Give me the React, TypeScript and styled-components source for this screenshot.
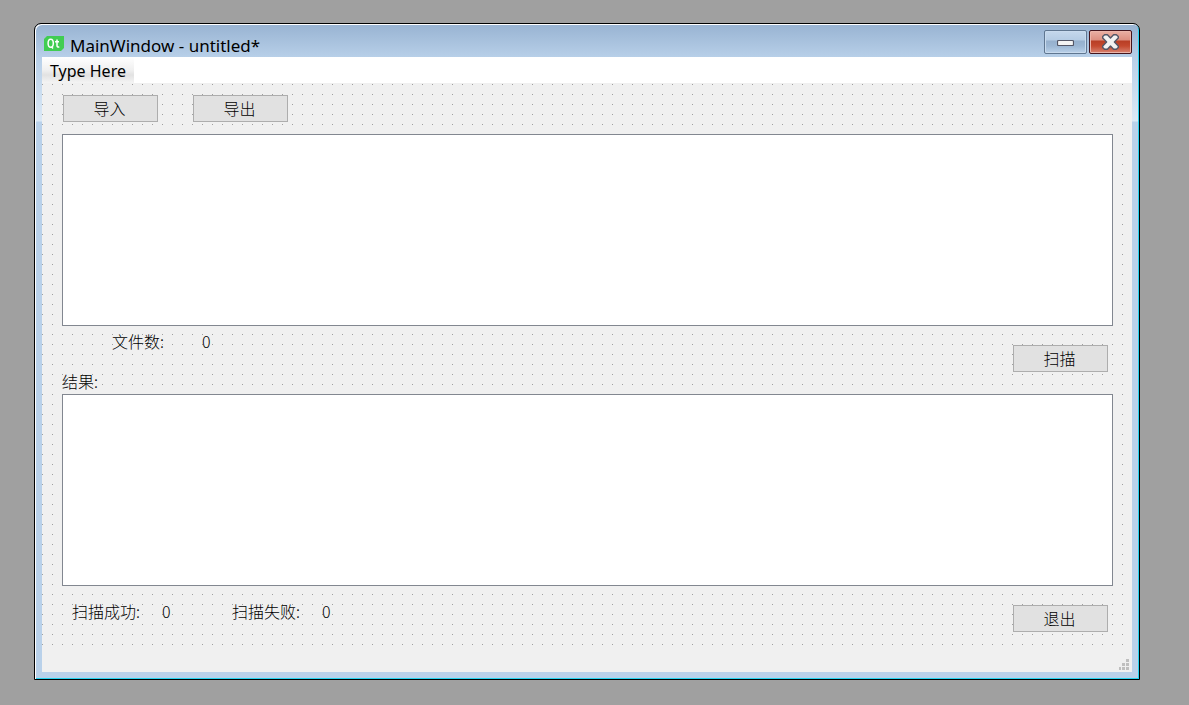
import React from "react";
import styled, { createGlobalStyle } from "styled-components";

const GlobalStyle = createGlobalStyle`
  * { box-sizing: border-box; }
  body { margin: 0; background: #a0a0a0; color: #000; }
  body, button, textarea { font: 300 16px/20px "Noto Sans CJK SC", sans-serif; }
`;

const Desktop = styled.div`
  display: flex;
  min-height: 100vh;
  padding: 23px 49px 25px 34px;
`;

const Window = styled.main`
  flex: 1;
  display: flex;
  flex-direction: column;
  border: 1px solid #000;
  border-radius: 7px 7px 0 0;
  padding: 0 7px 7px;
  background: linear-gradient(#98b3d2 0, #b7cfe8 33px, #dbe9f6 97px, #b9d1ea 98px);
  box-shadow: inset 1px 1px 0 #fff, inset -1px -1px 0 #27d3f0;
`;

const TitleBar = styled.header`
  display: flex;
  align-items: flex-start;
  height: 33px;
`;

const Title = styled.h1`
  flex: 1;
  margin: 12px 0 0 6px;
  font: 17px/20px "Noto Sans", sans-serif;
`;

const Logo = styled.svg`
  margin: 12px 0 0 2px;
`;

const Controls = styled.div`
  display: flex;
  gap: 2px;
  padding-top: 6px;
`;

const ControlButton = styled.button<{ $danger?: boolean }>`
  display: flex;
  align-items: center;
  justify-content: center;
  width: 43px;
  height: 24px;
  padding: 0;
  border: 1px solid ${(p) => (p.$danger ? "#43141c" : "#5f7690")};
  border-radius: 2px;
  background: ${(p) =>
    p.$danger
      ? "linear-gradient(#eab0a4 0, #dc8f80 9px, #b83e25 10px, #c4492f 15px, #d88472 22px)"
      : "linear-gradient(#c5d8ec 0, #b5cce4 9px, #96b0cd 10px, #9cb7d4 15px, #bad1e9 22px)"};
  box-shadow: inset 0 0 0 1px ${(p) => (p.$danger ? "#eab5aa" : "#c9dbee")};
`;

const Client = styled.div`
  flex: 1;
  display: flex;
  flex-direction: column;
  background: #f0f0f0;
`;

const MenuBar = styled.nav`
  display: flex;
  height: 26px;
  background: #fff;
`;

const MenuButton = styled.button`
  padding: 2px 8px 0;
  border: 0;
  background: linear-gradient(#fff 0, #f0f0f0 13px, #e2e2e2 18px, #f4f4f4 26px);
  font: 16px/20px "Noto Sans", sans-serif;
`;

const Form = styled.form`
  flex: 1;
  display: flex;
  flex-direction: column;
  padding: 12px 19px 0 20px;
  background: radial-gradient(circle at 0 0, #a0a0a0 1px, transparent 1px) 0 1px / 10px 10px;
`;

const ActionRow = styled.div`
  display: flex;
  gap: 35px;
  padding: 0 1px 12px;
`;

const PushButton = styled.button`
  flex: none;
  width: 95px;
  height: 27px;
  padding: 0 2px 2px 0;
  border: 1px solid #adadad;
  background: #e1e1e1;
`;

const ListBox = styled.textarea`
  flex: 1 0 80px;
  width: 100%;
  padding: 4px;
  border: 1px solid #828790;
  border-radius: 0;
  background: #fff;
  resize: none;
  outline: none;
`;

const InfoRow = styled.div<{ $height: number }>`
  display: flex;
  justify-content: space-between;
  align-items: flex-start;
  height: ${(p) => p.$height}px;
  padding: 5px 5px 0 0;

  & > ${PushButton} {
    margin-top: 14px;
  }
`;

const InfoLabels = styled.div`
  display: flex;
  flex-direction: column;
  gap: 20px;
`;

const Counters = styled.div<{ $indent: number; $top?: number }>`
  display: flex;
  padding: ${(p) => p.$top ?? 0}px 0 0 ${(p) => p.$indent}px;
`;

const Counter = styled.div`
  display: flex;
  width: 160px;

  & > label {
    width: 90px;
  }
`;

const StatusBar = styled.footer`
  display: flex;
  justify-content: flex-end;
  align-items: flex-end;
  height: 24px;
  padding: 0 3px 2px;
`;

function Stat({ id, label }: { id: string; label: string }) {
  return (
    <Counter>
      <label htmlFor={id}>{label}</label>
      <output id={id}>0</output>
    </Counter>
  );
}

export default function App() {
  return (
    <>
      <GlobalStyle />
      <Desktop>
        <Window>
          <TitleBar>
            <Logo width="20" height="15" viewBox="0 0 20 15" aria-hidden="true">
              <path d="M3 0H20V12L17 15H0V3Z" fill="#41cd52" />
              <path d="M6.7 3.2c-1.8 0-2.6 1.3-2.6 4s.8 4 2.6 4 2.6-1.3 2.6-4-.8-4-2.6-4ZM7.5 10.8l1.5 1.7M13 3.6v6c0 1.2.7 1.6 2.3 1.3M11 5.8h4" fill="none" stroke="#fff" strokeWidth="1.5" />
            </Logo>
            <Title>MainWindow - untitled*</Title>
            <Controls>
              <ControlButton type="button" aria-label="Minimize">
                <svg width="17" height="8" viewBox="0 0 17 8">
                  <rect x=".5" y="2.5" width="16" height="5" rx="1" fill="#f4f4f4" stroke="#535666" strokeWidth="1.2" />
                </svg>
              </ControlButton>
              <ControlButton type="button" aria-label="Close" $danger>
                <svg width="17" height="16" viewBox="0 0 17 16">
                  <path d="M2.6.7H5.4L8.5 3.9 11.6.7H14.4L16.3 2.6V4L12.4 8 16.3 12V13.4L14.4 15.3H11.6L8.5 12.1 5.4 15.3H2.6L.7 13.4V12L4.6 8 .7 4V2.6Z" fill="#f2f2f2" stroke="#535666" strokeWidth="1.4" strokeLinejoin="round" />
                </svg>
              </ControlButton>
            </Controls>
          </TitleBar>
          <Client>
            <MenuBar>
              <MenuButton type="button">Type Here</MenuButton>
            </MenuBar>
            <Form>
              <ActionRow>
                <PushButton type="button">导入</PushButton>
                <PushButton type="button">导出</PushButton>
              </ActionRow>
              <ListBox aria-label="文件" />
              <InfoRow $height={68}>
                <InfoLabels>
                  <Counters $indent={50}>
                    <Stat id="files" label="文件数:" />
                  </Counters>
                  <label htmlFor="result">结果:</label>
                </InfoLabels>
                <PushButton type="button">扫描</PushButton>
              </InfoRow>
              <ListBox id="result" />
              <InfoRow $height={62}>
                <Counters $indent={10} $top={10}>
                  <Stat id="succeeded" label="扫描成功:" />
                  <Stat id="failed" label="扫描失败:" />
                </Counters>
                <PushButton type="button">退出</PushButton>
              </InfoRow>
            </Form>
            <StatusBar>
              <svg width="10" height="11" viewBox="0 0 10 11" fill="#bfbfbf" aria-hidden="true">
                <path d="M7 0h3v3H7ZM3 4h3v3H3ZM7 4h3v3H7ZM0 8h2v3H0ZM3 8h3v3H3ZM7 8h3v3H7Z" />
              </svg>
            </StatusBar>
          </Client>
        </Window>
      </Desktop>
    </>
  );
}
